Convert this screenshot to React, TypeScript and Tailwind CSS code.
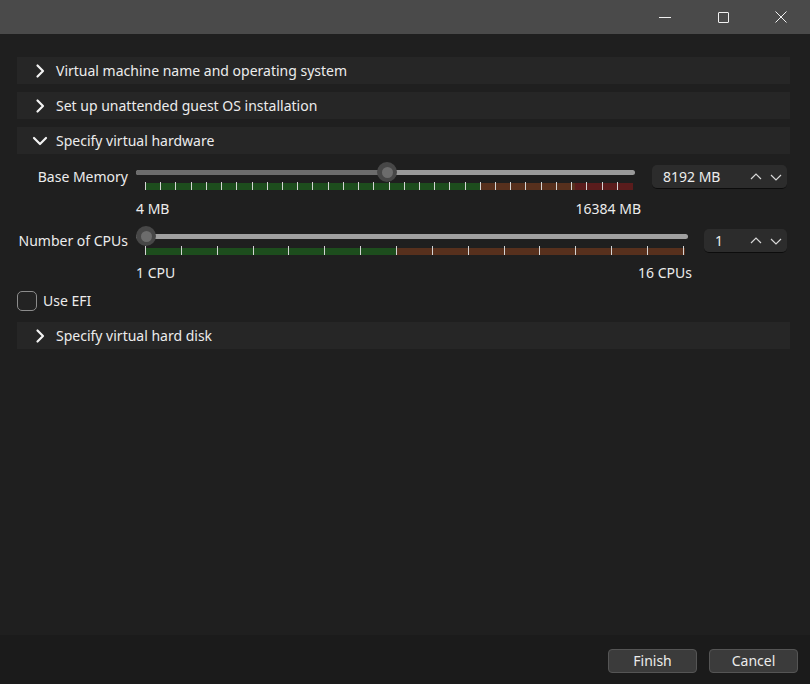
import React from "react";

const font = { fontFamily: '"Noto Sans", "Open Sans", sans-serif' };

const ChevronRight = () => (
  <svg width="16" height="16" viewBox="0 0 16 16" className="shrink-0">
    <path d="M5.5 2.5 L11 8 L5.5 13.5" fill="none" stroke="#f2f2f2" strokeWidth="2.2" strokeLinecap="round" strokeLinejoin="round" />
  </svg>
);

const ChevronDown = () => (
  <svg width="16" height="16" viewBox="0 0 16 16" className="shrink-0">
    <path d="M2 5 L8 11 L14 5" fill="none" stroke="#f2f2f2" strokeWidth="2.2" strokeLinecap="round" strokeLinejoin="round" />
  </svg>
);

const SectionHeader = ({ title, open = false }: { title: string; open?: boolean }) => (
  <div className="h-[27px] bg-[#262626] flex items-center pl-[15px] gap-[8px] text-[14px] text-[#ececec]">
    {open ? <ChevronDown /> : <ChevronRight />}
    <span className="pb-[1px]">{title}</span>
  </div>
);

const SpinBox = ({ value, width }: { value: string; width: string }) => (
  <div className={`${width} h-[24px] rounded-[5px] bg-[#2c2c2c] border-b border-b-[#0c0c0c] flex items-center pl-[11px] pr-[4px] text-[14px] text-[#ececec]`}>
    <span className="flex-1 pb-[1px]">{value}</span>
    <svg width="14" height="10" viewBox="0 0 14 10">
      <path d="M2 7 L7 2 L12 7" fill="none" stroke="#d8d8d8" strokeWidth="1.2" />
    </svg>
    <svg width="14" height="10" viewBox="0 0 14 10" className="ml-[6px]">
      <path d="M2 3 L7 8 L12 3" fill="none" stroke="#d8d8d8" strokeWidth="1.2" />
    </svg>
  </div>
);

const Handle = () => (
  <div className="w-[20px] h-[20px] rounded-full bg-[#474747] flex items-center justify-center">
    <div className="w-[11px] h-[11px] rounded-full bg-[#6c6c6c]" />
  </div>
);

const MemorySlider = () => (
  <div className="relative w-[499px] h-[30px]">
    <div className="absolute top-[8px] left-0 right-0 h-[5px] rounded-full bg-[#9a9a9a]" />
    <div className="absolute top-[8px] left-0 w-[251px] h-[5px] rounded-l-full bg-[#6c6c6c]" />
    <div className="absolute top-0 left-[241px]">
      <Handle />
    </div>
    <div className="absolute top-[21px] left-[9px] w-[488px] h-[7px] flex">
      <div className="w-[335px] bg-[#1d4d1d]" />
      <div className="w-[95px] bg-[#57301d]" />
      <div className="flex-1 bg-[#5a1c1c]" />
    </div>
    <div className="absolute top-[20px] left-[9px] w-[473px] h-[8px] flex justify-between">
      {Array.from({ length: 32 }).map((_, i) => (
        <div key={i} className="w-px h-full bg-[#d4d4d4]" />
      ))}
    </div>
  </div>
);

const CpuSlider = () => (
  <div className="relative w-[552px] h-[30px]">
    <div className="absolute top-[8px] left-0 right-0 h-[5px] rounded-full bg-[#a0a0a0]" />
    <div className="absolute top-0 left-0">
      <Handle />
    </div>
    <div className="absolute top-[22px] left-[9px] w-[540px] h-[7px] flex">
      <div className="w-[251px] bg-[#1d4d1d]" />
      <div className="flex-1 bg-[#57301d]" />
    </div>
    <div className="absolute top-[20px] left-[9px] w-[539px] h-[9px] flex justify-between">
      {Array.from({ length: 16 }).map((_, i) => (
        <div key={i} className="w-px h-full bg-[#d4d4d4]" />
      ))}
    </div>
  </div>
);

export default function App() {
  return (
    <div className="w-[810px] h-[684px] flex flex-col bg-[#1f1f1f] text-[#ececec] overflow-hidden" style={font}>
      {/* title bar */}
      <div className="h-[34px] bg-[#4a4a4a] flex justify-end shrink-0">
        <div className="w-[58px] flex items-center justify-center">
          <div className="w-[12px] h-px bg-[#f0f0f0]" />
        </div>
        <div className="w-[58px] flex items-center justify-center">
          <div className="w-[11px] h-[11px] border border-[#f0f0f0] rounded-[1px]" />
        </div>
        <div className="w-[58px] flex items-center justify-center">
          <svg width="12" height="12" viewBox="0 0 12 12">
            <path d="M0.5 0.5 L11.5 11.5 M11.5 0.5 L0.5 11.5" stroke="#f0f0f0" strokeWidth="1" />
          </svg>
        </div>
      </div>

      {/* body */}
      <div className="flex-1 pl-[17px] pr-[20px] pt-[23px] flex flex-col">
        <SectionHeader title="Virtual machine name and operating system" />
        <div className="mt-[8px]">
          <SectionHeader title="Set up unattended guest OS installation" />
        </div>
        <div className="mt-[8px]">
          <SectionHeader title="Specify virtual hardware" open />
        </div>

        {/* Base memory */}
        <div className="mt-[8px] flex items-center h-[30px]">
          <div className="w-[111px] text-right text-[14px] pb-[1px]">Base Memory</div>
          <div className="ml-[8px]">
            <MemorySlider />
          </div>
          <div className="ml-[17px]">
            <SpinBox value="8192 MB" width="w-[135px]" />
          </div>
        </div>
        <div className="mt-[8px] ml-[119px] w-[505px] flex justify-between text-[14px] leading-[18px]">
          <span>4 MB</span>
          <span>16384 MB</span>
        </div>

        {/* CPUs */}
        <div className="mt-[8px] flex items-center h-[30px]">
          <div className="w-[111px] text-right text-[14px] whitespace-nowrap pb-[2px]">Number of CPUs</div>
          <div className="ml-[8px]">
            <CpuSlider />
          </div>
          <div className="ml-[16px]">
            <SpinBox value="1" width="w-[83px]" />
          </div>
        </div>
        <div className="mt-[8px] ml-[119px] w-[556px] flex justify-between text-[14px] leading-[18px]">
          <span>1 CPU</span>
          <span>16 CPUs</span>
        </div>

        {/* EFI */}
        <div className="mt-[9px] flex items-center gap-[6px] h-[20px]">
          <div className="w-[20px] h-[20px] rounded-[5px] border border-[#8c8c8c] bg-[#232323]" />
          <span className="text-[14px] pb-[1px]">Use EFI</span>
        </div>

        <div className="mt-[11px]">
          <SectionHeader title="Specify virtual hard disk" />
        </div>
      </div>

      {/* footer */}
      <div className="h-[49px] bg-[#1b1b1b] shrink-0 flex justify-end items-start pt-[14px] pr-[12px] gap-[12px]">
        <button className="w-[89px] h-[24px] rounded-[4px] bg-[#3b3b3b] border border-[#555555] text-[14px] text-[#ececec] leading-none">
          Finish
        </button>
        <button className="w-[89px] h-[24px] rounded-[4px] bg-[#3b3b3b] border border-[#555555] text-[14px] text-[#ececec] leading-none">
          Cancel
        </button>
      </div>
    </div>
  );
}
